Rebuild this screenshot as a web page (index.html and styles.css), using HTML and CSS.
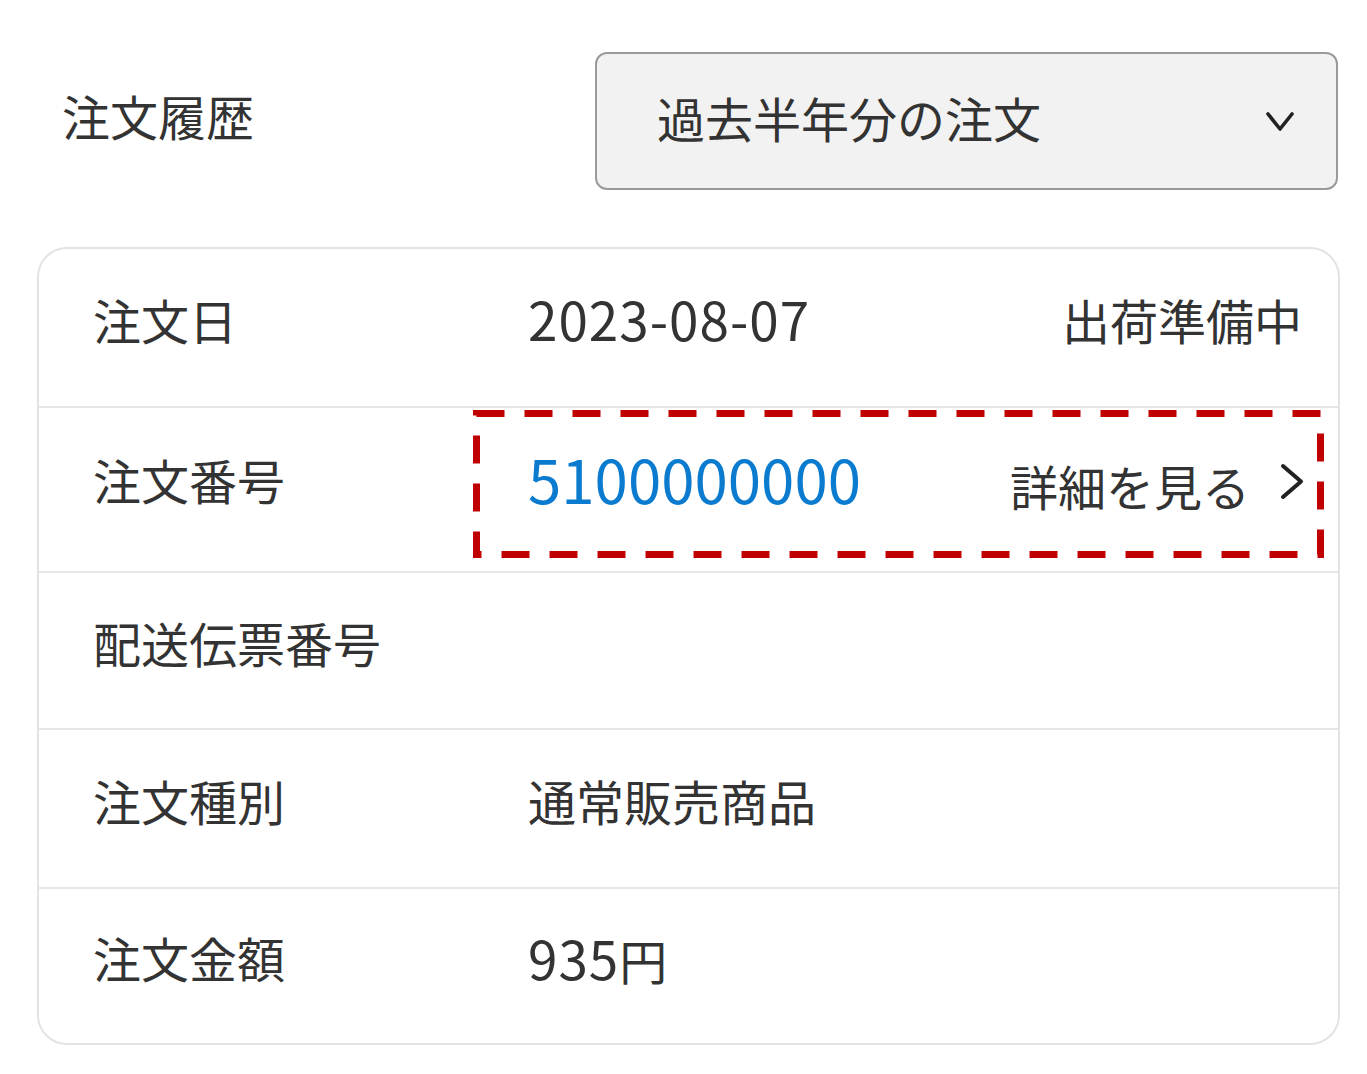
FILE: index.html
```html
<!DOCTYPE html>
<html lang="ja">
<head>
    <meta charset="UTF-8">
    <title>注文履歴</title>
    <link rel="stylesheet" href="styles.css">
</head>
<body>
    <div class="page">
        <div class="history-head">
            <h1 class="history-title">注文履歴</h1>
            <div class="period-select">
                <span class="period-text">過去半年分の注文</span>
                <svg class="period-arrow" width="30" height="23" viewBox="0 0 30 23">
                    <polyline points="3,4 15,19 27,4" fill="none" stroke="#222" stroke-width="3.6" stroke-linecap="round" stroke-linejoin="round"/>
                </svg>
            </div>
        </div>

        <div class="order-card">
            <div class="order-row row-date">
                <div class="order-label">注文日</div>
                <div class="order-value split">
                    <span class="num">2023-08-07</span>
                    <span class="status">出荷準備中</span>
                </div>
            </div>

            <!-- 注文番号：赤い点線で囲む -->
            <div class="order-row row-number">
                <div class="order-label">注文番号</div>
                <div class="order-value split marked">
                    <span class="order-no">5100000000</span>
                    <a class="detail-link" href="#">詳細を見る
                        <svg class="detail-arrow" width="24" height="37" viewBox="0 0 24 37">
                            <polyline points="3,3 21,18.5 3,34" fill="none" stroke="#222" stroke-width="4" stroke-linecap="round" stroke-linejoin="round"/>
                        </svg>
                    </a>
                    <svg class="mark-box" width="851" height="148" viewBox="0 0 851 148">
                        <rect x="3.5" y="3.5" width="844" height="141" fill="none" stroke="#c00000" stroke-width="7" stroke-dasharray="28 20"/>
                    </svg>
                </div>
            </div>

            <div class="order-row row-slip">
                <div class="order-label">配送伝票番号</div>
                <div class="order-value"></div>
            </div>

            <div class="order-row row-type">
                <div class="order-label">注文種別</div>
                <div class="order-value">通常販売商品</div>
            </div>

            <div class="order-row row-total">
                <div class="order-label">注文金額</div>
                <div class="order-value"><span class="num">935</span>円</div>
            </div>
        </div>
    </div>
</body>
</html>
```

FILE: styles.css
```css
* {
    box-sizing: border-box;
}

body {
    margin: 0;
    background: #fff;
    color: #333;
    font-family: "Noto Sans CJK JP", "Noto Sans", sans-serif;
}

.page {
    width: 1340px;
    padding: 52px 0 0 37px;
}

/* 上部：タイトルと期間選択 */
.history-head {
    display: flex;
    align-items: center;
    justify-content: space-between;
    padding-right: 2px;
}

.history-title {
    margin: 0;
    padding: 0 0 12px 25px;
    font-size: 48px;
    font-weight: normal;
    line-height: 1;
}

.period-select {
    width: 743px;
    height: 138px;
    display: flex;
    align-items: center;
    justify-content: space-between;
    padding: 0 41px 0 60px;
    background: #f2f2f2;
    border: 2px solid #9a9a9a;
    border-radius: 12px;
}

.period-text {
    font-size: 48px;
    line-height: 1;
    padding-bottom: 8px;
}

/* 注文カード */
.order-card {
    margin-top: 57px;
    width: 1303px;
    border: 2px solid #e3e3e3;
    border-radius: 30px;
}

.order-row {
    display: grid;
    grid-template-columns: 380px 1fr;
    align-items: center;
    padding: 0 36px 0 54px;
    border-bottom: 2px solid #e6e6e6;
    font-size: 48px;
    line-height: 1;
}

.order-row:last-child {
    border-bottom: none;
}

.row-date { height: 159px; }
.row-number { height: 165px; }
.row-slip { height: 157px; }
.row-type { height: 159px; }
.row-total { height: 154px; }

.order-label {
    padding-bottom: 18px;
}

.order-value {
    padding-left: 55px;
    padding-bottom: 18px;
}

.split {
    display: flex;
    align-items: center;
    justify-content: space-between;
}

.num {
    font-size: 53px;
    letter-spacing: 1px;
}

.row-number .order-label {
    padding-bottom: 22px;
}

.row-number .order-value {
    position: relative;
    align-self: start;
    height: 148px;
    margin: 2px -22px 0 0;
    padding: 0 20px 12px 55px;
}

.order-no {
    color: #0a7bcf;
    font-size: 60px;
}

.detail-link {
    display: flex;
    align-items: center;
    gap: 30px;
    padding-top: 14px;
    color: #333;
    text-decoration: none;
}

.detail-arrow {
    margin-bottom: 8px;
}

.mark-box {
    position: absolute;
    top: 0;
    left: 0;
    pointer-events: none;
}
```
